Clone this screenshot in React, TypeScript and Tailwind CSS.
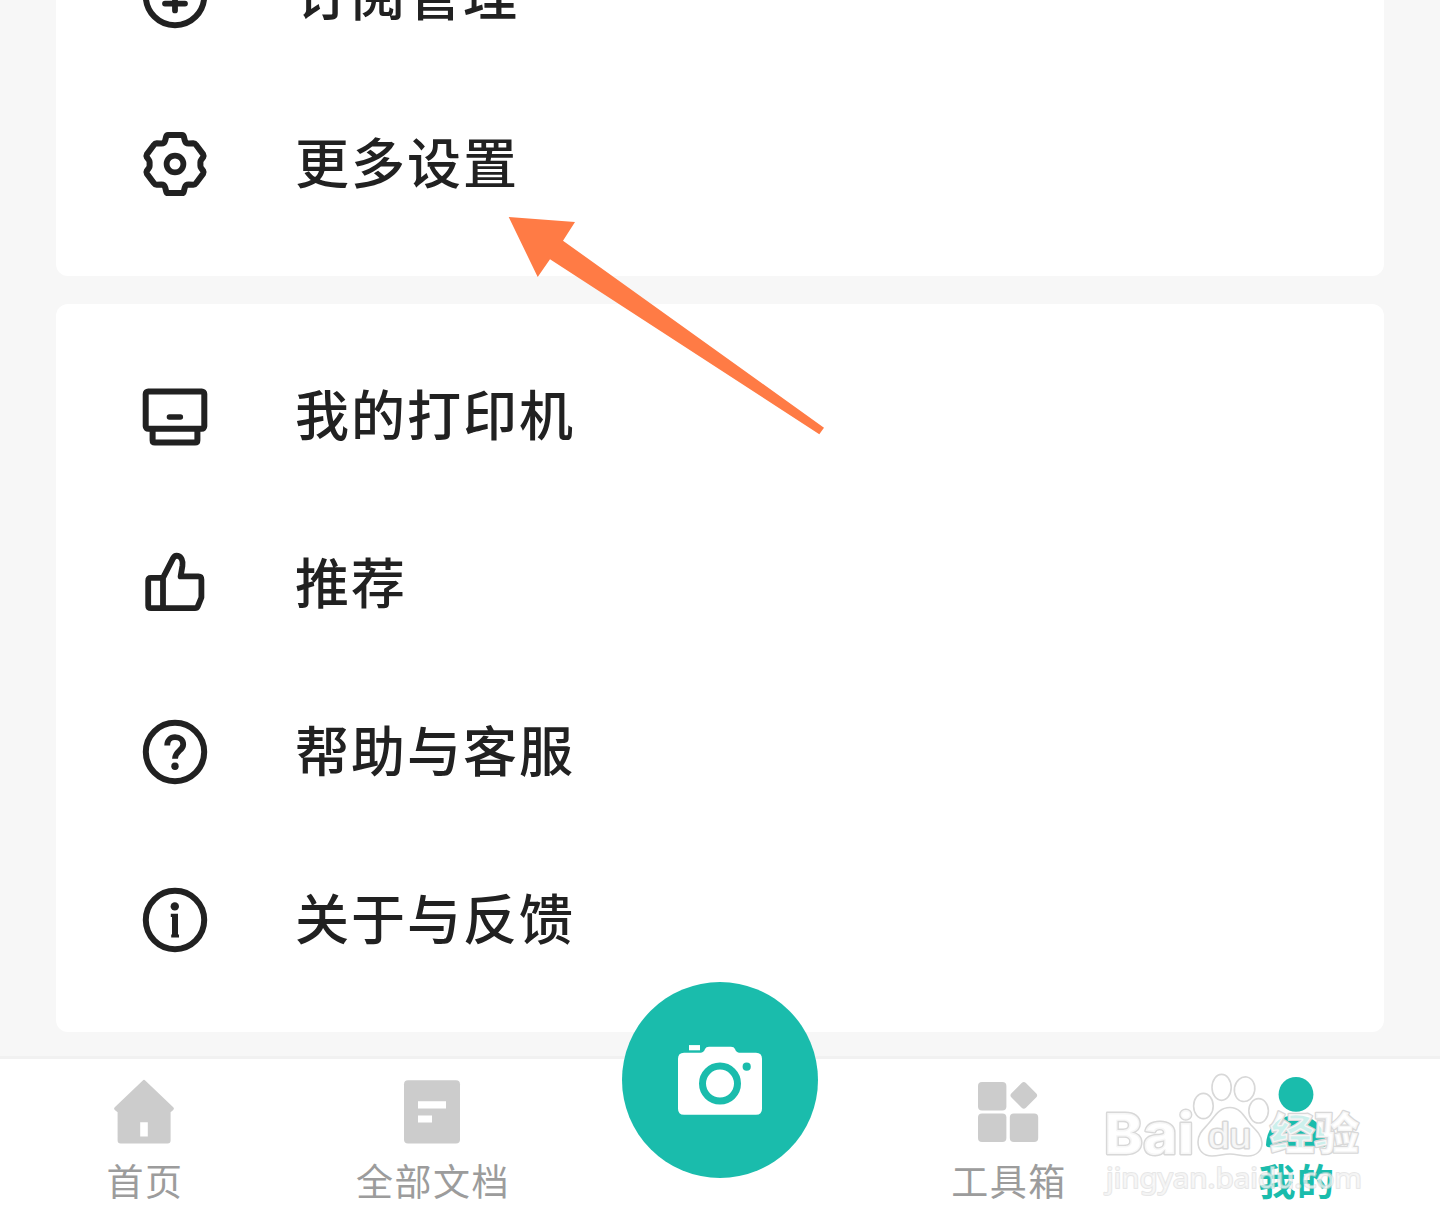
import type { ReactNode } from "react";

interface MenuItem {
  label: string;
  icon: ReactNode;
}

interface TabItem {
  label: string;
  icon: ReactNode;
  active?: boolean;
}

function LineIcon({ children }: { children: ReactNode }) {
  return (
    <svg
      viewBox="0 0 72 72"
      className="size-[72px] shrink-0"
      fill="none"
      stroke="#212121"
      strokeWidth="6"
      strokeLinejoin="round"
      strokeLinecap="round"
    >
      {children}
    </svg>
  );
}

function TabIcon({ children }: { children: ReactNode }) {
  return (
    <svg viewBox="0 0 72 72" className="size-[72px]" fill="currentColor">
      {children}
    </svg>
  );
}

const accountItems: MenuItem[] = [
  {
    label: "订阅管理",
    icon: (
      <LineIcon>
        <circle cx="36" cy="36" r="29.2" />
        <path d="M36 24v26.4M26 43.6h20" strokeWidth="5.8" />
      </LineIcon>
    ),
  },
  {
    label: "更多设置",
    icon: (
      <LineIcon>
        <path d="M29 7H43Q44.4 7 44.8 8.6L45.8 12.6Q46.6 15.6 49.6 15.6L54.4 15.2Q56 15.2 57 16.8L64.2 26.4Q65 27.8 64.2 29.2L62.2 31.8Q61.4 32.8 61.4 34V38Q61.4 39.2 62.2 40.2L64.2 42.8Q65 44.2 64.2 45.6L57 55.2Q56 56.8 54.4 56.8L49.6 56.4Q46.6 56.4 45.8 59.4L44.8 63.4Q44.4 65 43 65H29Q27.6 65 27.2 63.4L26.2 59.4Q25.4 56.4 22.4 56.4L17.6 56.8Q16 56.8 15 55.2L7.8 45.6Q7 44.2 7.8 42.8L9.8 40.2Q10.6 39.2 10.6 38V34Q10.6 32.8 9.8 31.8L7.8 29.2Q7 27.8 7.8 26.4L15 16.8Q16 15.2 17.6 15.2L22.4 15.6Q25.4 15.6 26.2 12.6L27.2 8.6Q27.6 7 29 7Z" />
        <circle cx="36" cy="36" r="8.4" strokeWidth="5.8" />
      </LineIcon>
    ),
  },
];

const supportItems: MenuItem[] = [
  {
    label: "我的打印机",
    icon: (
      <LineIcon>
        <rect x="6.7" y="11.4" width="58.6" height="37.4" rx="2.5" />
        <path d="M13.6 49V60.3Q13.6 62.6 15.9 62.6H56.1Q58.4 62.6 58.4 60.3V49" />
        <path d="M30.4 37H41.4" strokeWidth="5.4" />
      </LineIcon>
    ),
  },
  {
    label: "推荐",
    icon: (
      <LineIcon>
        <path
          d="M24 29.8H12Q9.2 29.8 9.2 32.8V57.4Q9.2 60.2 12 60.2H56Q58 60.2 58.8 58.4L62.4 49.5V31.5Q62.4 28.4 59.4 28.4H41.6L43.4 18C44.2 12.5 42.2 8.8 39 7.9Q35.6 7.2 34 10.4L24 29.8V60"
          strokeWidth="5.8"
        />
      </LineIcon>
    ),
  },
  {
    label: "帮助与客服",
    icon: (
      <LineIcon>
        <circle cx="36" cy="36" r="29.2" />
        <path
          d="M28.2 29.4C28.2 24.4 31.4 21.2 36 21.2C40.8 21.2 44.2 24.2 44.2 28.4C44.2 34.6 36 35 36 42.8"
          strokeWidth="5.8"
          strokeLinecap="butt"
        />
        <circle cx="36" cy="50.3" r="3.7" fill="#212121" stroke="none" />
      </LineIcon>
    ),
  },
  {
    label: "关于与反馈",
    icon: (
      <LineIcon>
        <circle cx="36" cy="36" r="29.2" />
        <circle cx="35.8" cy="22.4" r="4.2" fill="#212121" stroke="none" />
        <path d="M31.8 29.8H39V50.4H40V53.6H32.2V50.4H33V33H31.8Z" fill="#212121" stroke="none" />
      </LineIcon>
    ),
  },
];

const leftTabs: TabItem[] = [
  {
    label: "首页",
    icon: (
      <TabIcon>
        <path
          fillRule="evenodd"
          d="M34.8 4.6Q36 3 37.2 4.6L65.5 31.6Q66.6 33 65.2 34L62.6 36.2V64.5Q62.6 67.5 59.6 67.5H12.6Q9.6 67.5 9.6 64.5V36.2L6.8 34Q5.4 33 6.5 31.6ZM32.2 46.2V60.6H39.8V46.2Z"
        />
      </TabIcon>
    ),
  },
  {
    label: "全部文档",
    icon: (
      <TabIcon>
        <rect x="8" y="4.2" width="56" height="63.4" rx="4" />
        <path d="M22 25.2H50V32.6H22ZM22 39.4H36V46.6H22Z" fill="#fff" />
      </TabIcon>
    ),
  },
];

const rightTabs: TabItem[] = [
  {
    label: "工具箱",
    icon: (
      <TabIcon>
        <rect x="6" y="6" width="28.4" height="28.4" rx="4" />
        <rect x="6" y="37.6" width="28.4" height="28.4" rx="4" />
        <rect x="37.8" y="37.6" width="28.4" height="28.4" rx="4" />
        <rect x="41.6" y="9.2" width="20.4" height="20.4" rx="3" transform="rotate(45 51.8 19.4)" />
      </TabIcon>
    ),
  },
  {
    label: "我的",
    active: true,
    icon: (
      <TabIcon>
        <circle cx="36" cy="18.4" r="17.4" />
        <path d="M23 41.5Q36 36.5 49 41.5C59 46 65.5 56 66 68.5Q66 71.3 63 71.3H9Q6 71.3 6 68.5C6.5 56 13 46 23 41.5Z" />
      </TabIcon>
    ),
  },
];

function MenuRow({ item }: { item: MenuItem }) {
  return (
    <li className="flex h-[168px] shrink-0 items-center gap-[84px] pl-[83px]">
      {item.icon}
      <span className="pb-1.5 text-[54px] leading-none font-medium tracking-[2px] text-[#212121]">
        {item.label}
      </span>
    </li>
  );
}

function Tab({ tab }: { tab: TabItem }) {
  return (
    <button
      type="button"
      className={`flex flex-col items-center gap-1.5 pt-[17px] ${
        tab.active ? "text-[#1abcac]" : "text-[#ccc]"
      }`}
    >
      {tab.icon}
      <span
        className={`pl-0.5 text-[37px] leading-[52px] tracking-[1.5px] ${
          tab.active ? "font-bold" : "text-[#9c9c9c]"
        }`}
      >
        {tab.label}
      </span>
    </button>
  );
}

function CameraButton() {
  return (
    <button
      type="button"
      className="-mt-[77px] flex size-[196px] items-center justify-center self-start justify-self-center rounded-full bg-[#1abcac]"
    >
      <svg viewBox="0 0 84 72" className="h-[72px] w-[84px]" fill="#fff">
        <rect x="11" y="1.1" width="11" height="5.2" />
        <path d="M6 8.7H23Q26 8.4 27 5Q28 2.7 31 2.7H53Q56 2.7 57 5Q58 8.4 61 8.7H78Q84 8.7 84 14.7V64.7Q84 70.7 78 70.7H6Q0 70.7 0 64.7V14.7Q0 8.7 6 8.7Z" />
        <circle cx="42" cy="39.6" r="17.5" stroke="#1abcac" strokeWidth="7" />
        <circle cx="68.7" cy="22.7" r="4.1" fill="#1abcac" />
      </svg>
    </button>
  );
}

function Watermark() {
  return (
    <svg
      viewBox="1090 1060 290 150"
      className="pointer-events-none absolute top-[1060px] left-[1090px] h-[150px] w-[290px]"
      fill="#fff"
      fillOpacity="0.78"
      stroke="#d8d8d8"
      strokeWidth="1.6"
      strokeLinejoin="round"
      fontFamily="'Liberation Sans', 'Noto Sans CJK SC', sans-serif"
    >
      <ellipse cx="1203.4" cy="1106" rx="9.8" ry="12.6" />
      <ellipse cx="1221.6" cy="1087.4" rx="9.6" ry="13" />
      <ellipse cx="1244.6" cy="1089.2" rx="10.2" ry="12.4" transform="rotate(10 1244.6 1089.2)" />
      <ellipse cx="1258.6" cy="1110.8" rx="9.8" ry="12.2" />
      <path d="M1230 1107.5C1241 1107.5 1245 1118 1251 1125C1257 1131 1262 1136 1262 1143C1262 1151 1256 1156 1248 1156C1240 1156 1237 1154 1230 1154C1223 1154 1219 1156 1212 1156C1203 1156 1198 1150 1198 1142C1198 1133 1204 1129 1209 1123C1215 1116 1219 1107.5 1230 1107.5Z" />
      <text
        x="1104"
        y="1154"
        fontSize="57"
        fontWeight="800"
        fontFamily="Inter, sans-serif"
        textLength="90"
        lengthAdjust="spacingAndGlyphs"
        paintOrder="stroke"
        strokeWidth="2.8"
      >
        Bai
      </text>
      <text
        x="1208"
        y="1148"
        fontSize="35"
        textLength="43"
        lengthAdjust="spacingAndGlyphs"
        strokeWidth="3"
        paintOrder="stroke"
      >
        du
      </text>
      <text
        x="1270"
        y="1150"
        fontSize="44"
        fontWeight="900"
        textLength="89"
        lengthAdjust="spacingAndGlyphs"
        paintOrder="stroke"
        strokeWidth="2.6"
      >
        经验
      </text>
      <text
        x="1106"
        y="1188"
        fontSize="28"
        textLength="256"
        lengthAdjust="spacingAndGlyphs"
        fontFamily="'Noto Sans', sans-serif"
        fillOpacity="0.55"
        strokeOpacity="0.6"
        paintOrder="stroke"
        strokeWidth="2"
      >
        jingyan.baidu.com
      </text>
    </svg>
  );
}

export default function App() {
  return (
    <div className="relative flex h-[1228px] w-[1440px] flex-col overflow-hidden bg-[#f7f7f7] font-['Noto_Sans_CJK_SC',sans-serif]">
      <main className="flex h-[1056px] flex-col gap-7 px-14">
        <ul className="flex h-[276px] shrink-0 flex-col justify-end overflow-hidden rounded-b-xl bg-white pb-7">
          {accountItems.map((item) => (
            <MenuRow key={item.label} item={item} />
          ))}
        </ul>
        <ul className="flex shrink-0 flex-col rounded-xl bg-white py-7">
          {supportItems.map((item) => (
            <MenuRow key={item.label} item={item} />
          ))}
        </ul>
      </main>

      <nav className="grid flex-1 grid-cols-5 border-t-[3px] border-[#f1f1f1] bg-white">
        {leftTabs.map((tab) => (
          <Tab key={tab.label} tab={tab} />
        ))}
        <CameraButton />
        {rightTabs.map((tab) => (
          <Tab key={tab.label} tab={tab} />
        ))}
      </nav>

      <svg
        viewBox="0 0 316 60"
        className="pointer-events-none absolute top-[217px] left-[508px] h-[60px] w-[316px] overflow-visible"
        fill="#ff7b45"
      >
        <path d="M.7 0 67 5 55 23.7 316 210.7 311.3 217.3 42 42.3 29.7 60Z" />
      </svg>

      <Watermark />
    </div>
  );
}
